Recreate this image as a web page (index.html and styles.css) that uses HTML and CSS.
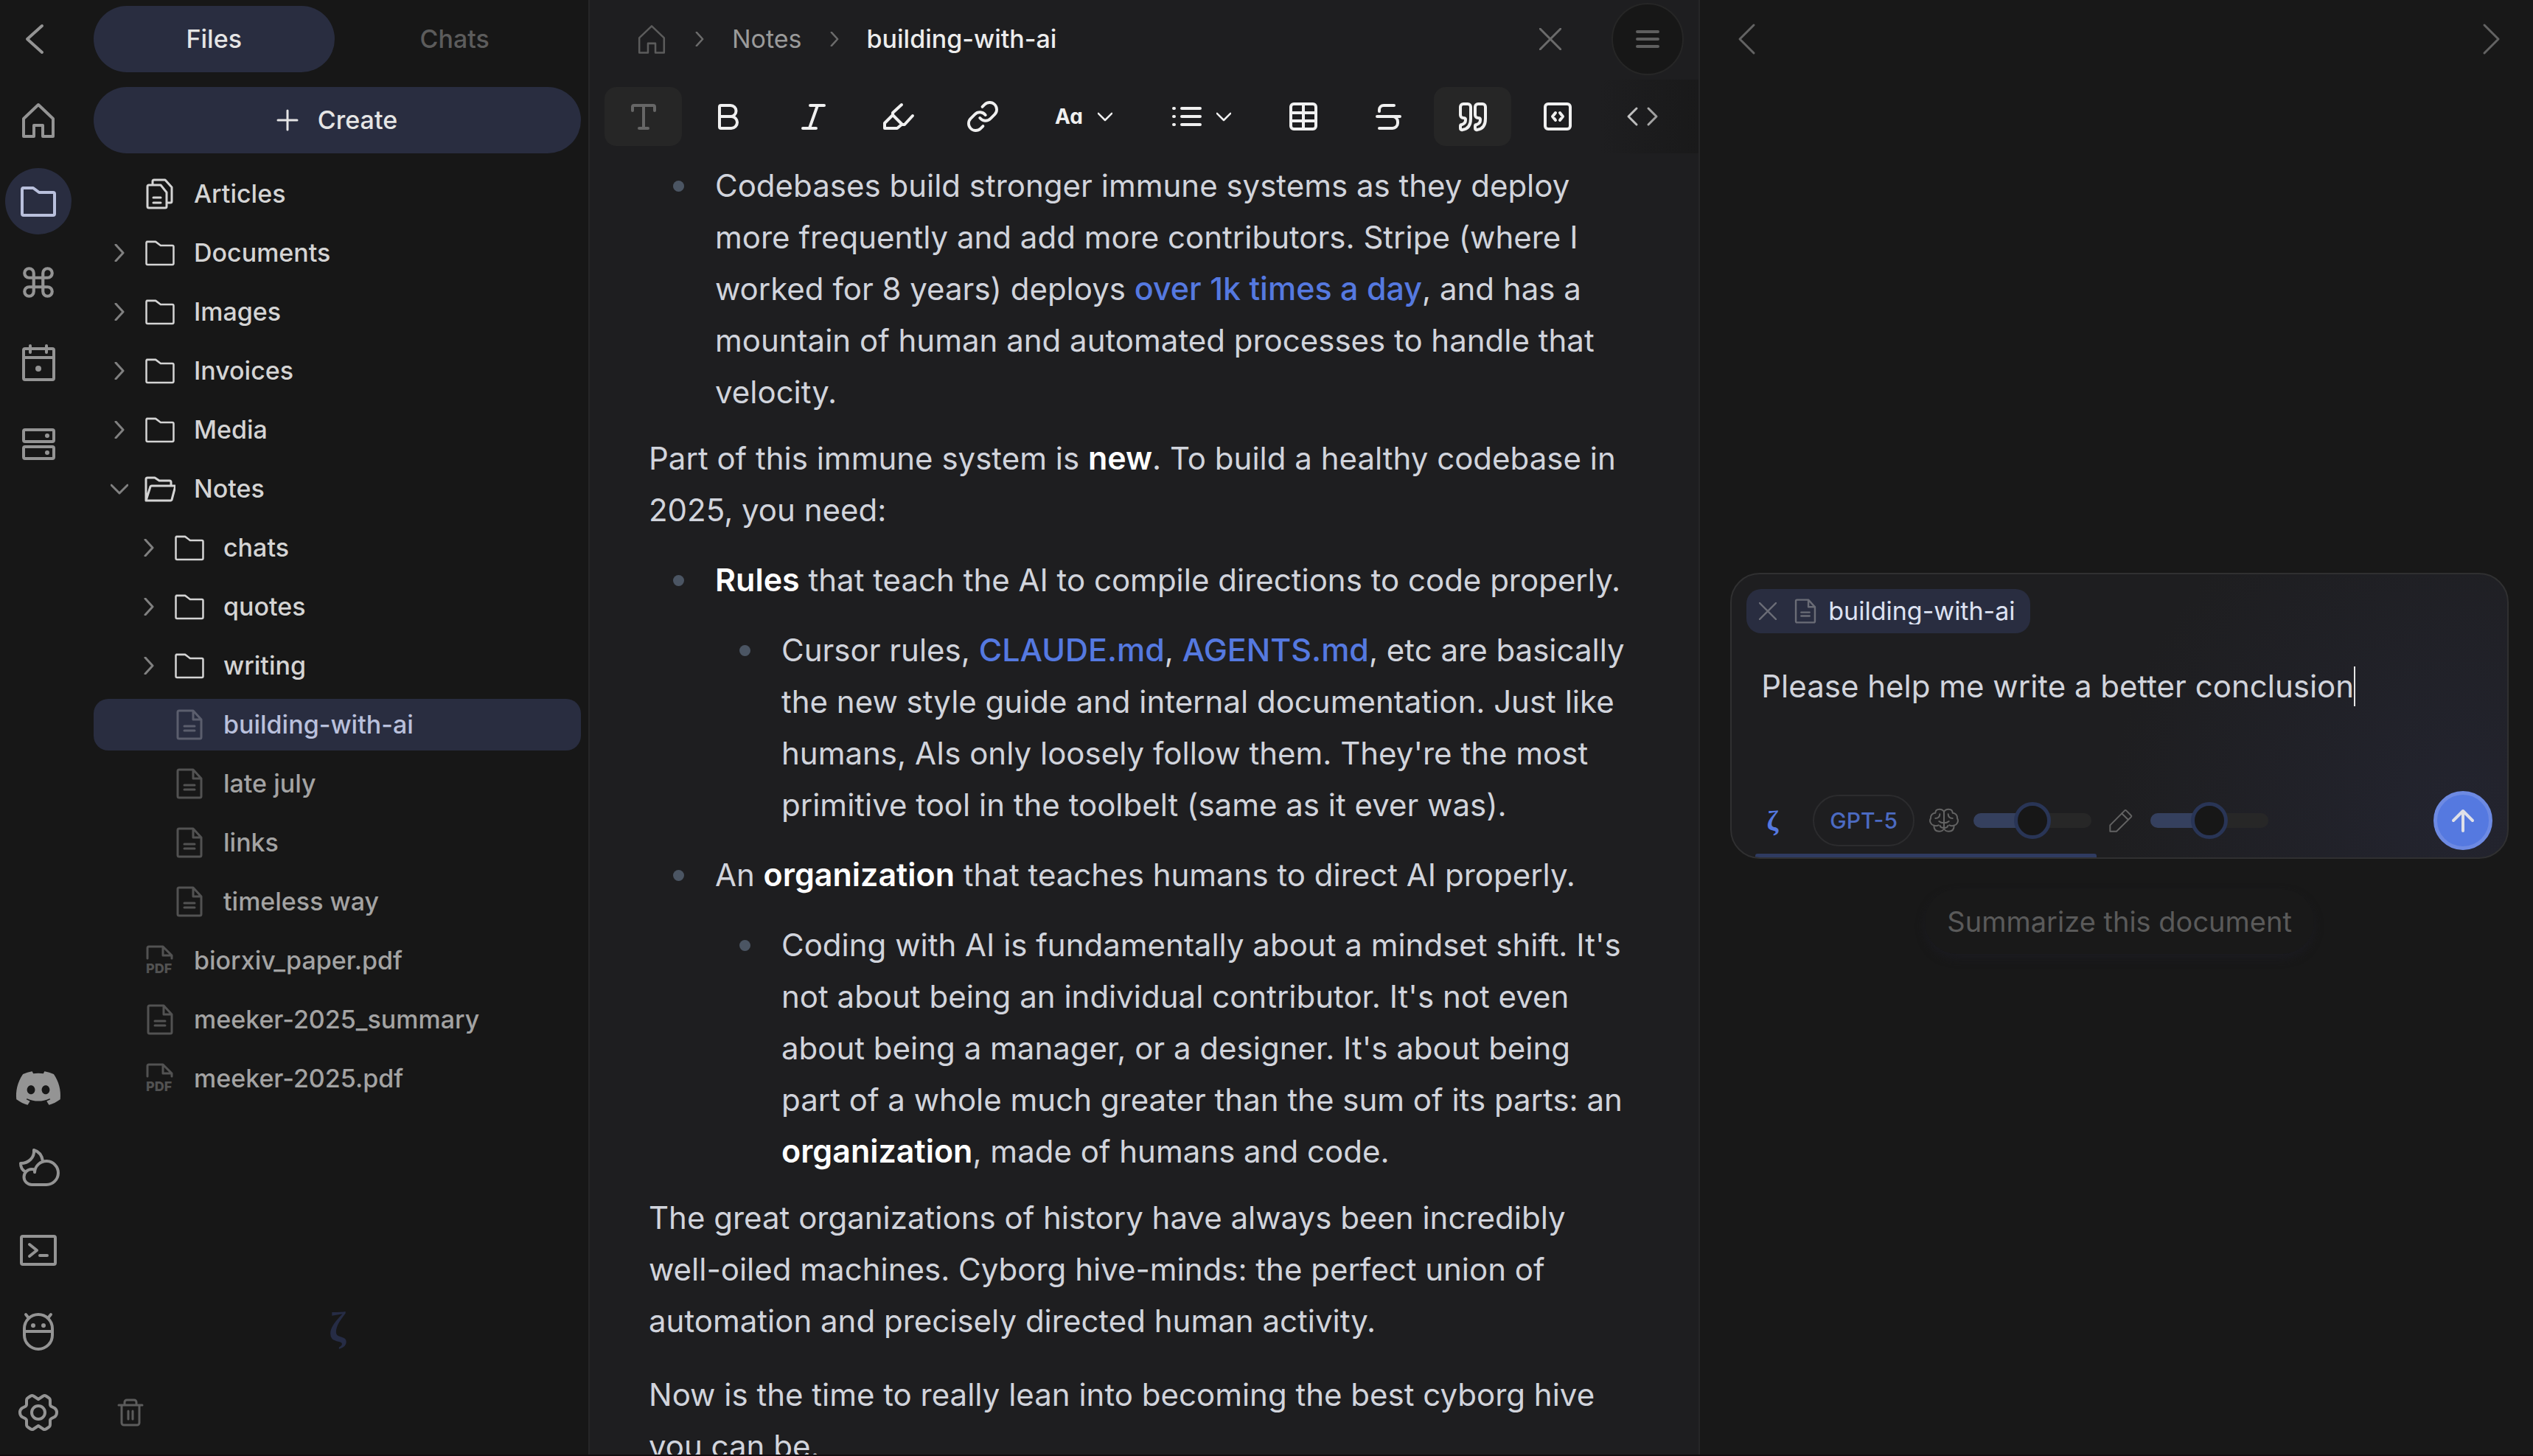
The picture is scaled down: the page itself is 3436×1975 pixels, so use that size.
FILE: index.html
```
<!DOCTYPE html>
<html lang="en">
<head>
<meta charset="utf-8">
<title>building-with-ai</title>
<link rel="stylesheet" href="styles.css">
</head>
<body>
<svg class="sprite" aria-hidden="true">
  <symbol id="home" viewBox="0 0 50 50"><path d="M5 23 25 4 45 23V47H31V32H19V47H5Z"/></symbol>
  <symbol id="folder" viewBox="0 0 50 50"><path d="M4 7H18L26 13H45a2 2 0 0 1 2 2V42a2 2 0 0 1-2 2H5a2 2 0 0 1-2-2V9a2 2 0 0 1 2-2Z"/></symbol>
  <symbol id="folder-open" viewBox="0 0 42 42"><path d="M2 37V8a2 2 0 0 1 2-2H14L20 10H34a2 2 0 0 1 2 2V17M2 37 8 18a2 2 0 0 1 2-1H42L37 36a2 2 0 0 1-2 1Z"/></symbol>
  <symbol id="file" viewBox="0 0 42 42"><path d="M7 2H26L37 14V38a2 2 0 0 1-2 2H7a2 2 0 0 1-2-2V4a2 2 0 0 1 2-2ZM26 2V14H37M14 23H28M14 29H28"/></symbol>
  <symbol id="files" viewBox="0 0 42 42"><path d="M6 9H22L30 19V38a2 2 0 0 1-2 2H6a2 2 0 0 1-2-2V11a2 2 0 0 1 2-2ZM11 9V4a2 2 0 0 1 2-2H28L37 12V31a2 2 0 0 1-2 2H31M12 26H22M12 33H22"/></symbol>
  <symbol id="pdf" viewBox="0 0 42 42"><path d="M4 18V4a2 2 0 0 1 2-2H25L37 14V18M25 2V14H37"/><text x="2" y="38">PDF</text></symbol>
  <symbol id="right" viewBox="0 0 24 24"><path d="M7 1 17 12 7 23"/></symbol>
  <symbol id="down" viewBox="0 0 24 24"><path d="M1 7 12 18 23 7"/></symbol>
  <symbol id="close" viewBox="0 0 30 30"><path d="M0 0 30 30M30 0 0 30"/></symbol>
</svg>

<div class="app">
  <nav class="rail" aria-label="Main">
    <button class="rail-item" aria-label="Back"><svg class="icon bold" viewBox="0 0 50 50"><path d="M30 7 10 25 30 43"/></svg></button>
    <button class="rail-item" aria-label="Home"><svg class="icon"><use href="#home"/></svg></button>
    <button class="rail-item active" aria-label="Files"><svg class="icon"><use href="#folder"/></svg></button>
    <button class="rail-item" aria-label="Commands"><svg class="icon thin24" viewBox="0 0 24 24"><path d="M15 6v12a3 3 0 1 0 3-3H6a3 3 0 1 0 3 3V6a3 3 0 1 0-3 3h12a3 3 0 1 0-3-3"/></svg></button>
    <button class="rail-item" aria-label="Calendar"><svg class="icon" viewBox="0 0 50 50"><rect x="5" y="5" width="41" height="42" rx="2"/><path d="M5 17H46M14 1V10M36 1V10"/><circle class="solid" cx="25" cy="32" r="4"/></svg></button>
    <button class="rail-item" aria-label="Storage"><svg class="icon" viewBox="0 0 50 50"><rect x="5" y="5" width="41" height="16" rx="2"/><rect x="5" y="28" width="41" height="16" rx="2"/><circle class="solid" cx="37" cy="13" r="3"/><circle class="solid" cx="37" cy="36" r="3"/></svg></button>
    <span class="spacer"></span>
    <button class="rail-item" aria-label="Discord"><svg class="icon filled" viewBox="0 0 24 24"><path d="M20.317 4.3698a19.7913 19.7913 0 00-4.8851-1.5152.0741.0741 0 00-.0785.0371c-.211.3753-.4447.8648-.6083 1.2495-1.8447-.2762-3.68-.2762-5.4868 0-.1636-.3933-.4058-.8742-.6177-1.2495a.077.077 0 00-.0785-.037 19.7363 19.7363 0 00-4.8852 1.515.0699.0699 0 00-.0321.0277C.5334 9.0458-.319 13.5799.0992 18.0578a.0824.0824 0 00.0312.0561c2.0528 1.5076 4.0413 2.4228 5.9929 3.0294a.0777.0777 0 00.0842-.0276c.4616-.6304.8731-1.2952 1.226-1.9942a.076.076 0 00-.0416-.1057c-.6528-.2476-1.2743-.5495-1.8722-.8923a.077.077 0 01-.0076-.1277c.1258-.0943.2517-.1923.3718-.2914a.0743.0743 0 01.0776-.0105c3.9278 1.7933 8.18 1.7933 12.0614 0a.0739.0739 0 01.0785.0095c.1202.099.246.1981.3728.2924a.077.077 0 01-.0066.1276 12.2986 12.2986 0 01-1.873.8914.0766.0766 0 00-.0407.1067c.3604.698.7719 1.3628 1.225 1.9932a.076.076 0 00.0842.0286c1.961-.6067 3.9495-1.5219 6.0023-3.0294a.077.077 0 00.0313-.0552c.5004-5.177-.8382-9.6739-3.5485-13.6604a.061.061 0 00-.0312-.0286zM8.02 15.3312c-1.1825 0-2.1569-1.0857-2.1569-2.419 0-1.3332.9555-2.4189 2.157-2.4189 1.2108 0 2.1757 1.0952 2.1568 2.419 0 1.3332-.9555 2.4189-2.1569 2.4189zm7.9748 0c-1.1825 0-2.1569-1.0857-2.1569-2.419 0-1.3332.9554-2.4189 2.1569-2.4189 1.2108 0 2.1757 1.0952 2.1568 2.419 0 1.3332-.946 2.4189-2.1568 2.4189Z"/></svg></button>
    <button class="rail-item" aria-label="Theme"><svg class="icon" viewBox="0 2 50 50"><path d="M16 48H36A16 16 0 1 0 20 31C20 28 21 27 16 27A10 10 0 0 0 16 48ZM31 16C30 9 26 3 19 1C20 11 12 19 1 19C1 24 3 28 7 30"/></svg></button>
    <button class="rail-item" aria-label="Terminal"><svg class="icon" viewBox="0 0 50 50"><rect x="2" y="6" width="46" height="38" rx="2"/><path d="M13 17 23 25 13 33M27 32H37"/></svg></button>
    <button class="rail-item" aria-label="Report a bug"><svg class="icon" viewBox="0 0 50 50"><rect x="6" y="2" width="38" height="47" rx="19"/><path d="M6 25H44M8 2 12 7M42 2 38 7"/><circle class="solid" cx="18" cy="17" r="3"/><circle class="solid" cx="32" cy="17" r="3"/></svg></button>
    <button class="rail-item" aria-label="Settings"><svg class="icon" viewBox="0 0 50 50"><path d="M25 7 31 3Q33 1 36 3L39 5Q41 6 41 9V14Q41 16 43 17L47 19Q50 21 50 25T47 31L43 33Q41 34 41 36V41Q41 44 39 45L36 47Q33 49 31 47L25 43 19 47Q17 49 14 47L11 45Q9 44 9 41V36Q9 34 7 33L3 31Q0 29 0 25T3 19L7 17Q9 16 9 14V9Q9 6 11 5L14 3Q17 1 19 3Z"/><circle cx="25" cy="25" r="9"/></svg></button>
  </nav>

  <aside class="sidebar">
    <div class="tabs">
      <button class="tab selected">Files</button>
      <button class="tab">Chats</button>
    </div>
    <button class="create"><svg class="plus" viewBox="0 0 28 28"><path d="M14 1V27M1 14H27"/></svg>Create</button>
    <ul class="tree">
      <li><a class="row" href="#"><span class="twist"></span><svg class="node"><use href="#files"/></svg>Articles</a></li>
      <li><a class="row" href="#"><svg class="twist"><use href="#right"/></svg><svg class="node"><use href="#folder"/></svg>Documents</a></li>
      <li><a class="row" href="#"><svg class="twist"><use href="#right"/></svg><svg class="node"><use href="#folder"/></svg>Images</a></li>
      <li><a class="row" href="#"><svg class="twist"><use href="#right"/></svg><svg class="node"><use href="#folder"/></svg>Invoices</a></li>
      <li><a class="row" href="#"><svg class="twist"><use href="#right"/></svg><svg class="node"><use href="#folder"/></svg>Media</a></li>
      <li><a class="row" href="#"><svg class="twist"><use href="#down"/></svg><svg class="node"><use href="#folder-open"/></svg>Notes</a>
        <ul class="tree nested">
          <li><a class="row" href="#"><svg class="twist"><use href="#right"/></svg><svg class="node"><use href="#folder"/></svg>chats</a></li>
          <li><a class="row" href="#"><svg class="twist"><use href="#right"/></svg><svg class="node"><use href="#folder"/></svg>quotes</a></li>
          <li><a class="row" href="#"><svg class="twist"><use href="#right"/></svg><svg class="node"><use href="#folder"/></svg>writing</a></li>
          <li><a class="row doc current" href="#"><span class="twist"></span><svg class="node"><use href="#file"/></svg>building-with-ai</a></li>
          <li><a class="row doc" href="#"><span class="twist"></span><svg class="node"><use href="#file"/></svg>late july</a></li>
          <li><a class="row doc" href="#"><span class="twist"></span><svg class="node"><use href="#file"/></svg>links</a></li>
          <li><a class="row doc" href="#"><span class="twist"></span><svg class="node"><use href="#file"/></svg>timeless way</a></li>
        </ul>
      </li>
      <li><a class="row doc" href="#"><span class="twist"></span><svg class="node"><use href="#pdf"/></svg>biorxiv_paper.pdf</a></li>
      <li><a class="row doc" href="#"><span class="twist"></span><svg class="node"><use href="#file"/></svg>meeker-2025_summary</a></li>
      <li><a class="row doc" href="#"><span class="twist"></span><svg class="node"><use href="#pdf"/></svg>meeker-2025.pdf</a></li>
    </ul>
    <div class="brand">ζ</div>
    <button class="trash" aria-label="Trash"><svg viewBox="0 0 34 38"><path d="M1 9H33M9 9V5a3 3 0 0 1 3-3H22a3 3 0 0 1 3 3V9M5 9V33a3 3 0 0 0 3 3H26a3 3 0 0 0 3-3V9M14 17V28M20 17V28"/></svg></button>
  </aside>

  <main class="editor">
    <header class="crumbs">
      <a class="crumb-home" href="#" aria-label="Home"><svg><use href="#home"/></svg></a>
      <svg class="sep"><use href="#right"/></svg>
      <a href="#">Notes</a>
      <svg class="sep"><use href="#right"/></svg>
      <span class="here">building-with-ai</span>
      <span class="spacer"></span>
      <button class="round" aria-label="Close"><svg class="x"><use href="#close"/></svg></button>
      <button class="round menu" aria-label="Menu"><svg class="x" viewBox="0 0 30 30"><path d="M1 5H29M1 15H29M1 25H29"/></svg></button>
    </header>

    <div class="toolbar">
      <button class="tool on muted" aria-label="Text"><svg viewBox="0 0 50 50"><path d="M10 17V12a2 2 0 0 1 2-2H38a2 2 0 0 1 2 2V17M25 10V41M19 41H31"/></svg></button>
      <button class="tool" aria-label="Bold"><svg viewBox="0 0 50 50"><path d="M29 25H13V12a2 2 0 0 1 2-2H28a7 7 0 0 1 0 15H29a8 8 0 0 1 0 16H15a2 2 0 0 1-2-2V25"/></svg></button>
      <button class="tool" aria-label="Italic"><svg viewBox="0 0 50 50"><path d="M21 10H40M11 41H29M31 10 20 41"/></svg></button>
      <button class="tool" aria-label="Highlight"><svg viewBox="0 0 50 50"><path d="M30 9 18 20V23L7 34V41H24L30 36H34L45 24M18 23 31 36"/></svg></button>
      <button class="tool" aria-label="Link"><svg class="link24" viewBox="0 0 24 24"><path d="M10 13a5 5 0 0 0 7.54.54l3-3a5 5 0 0 0-7.07-7.07l-1.72 1.71M14 11a5 5 0 0 0-7.54-.54l-3 3a5 5 0 0 0 7.07 7.07l1.71-1.71"/></svg></button>
      <button class="tool wide" aria-label="Text size"><span class="aa">Aa</span><svg class="caret-down"><use href="#down"/></svg></button>
      <button class="tool wide" aria-label="List"><svg class="list" viewBox="0 0 40 50"><path d="M13 14H38M13 25H38M13 36H38M2 14h1M2 25h1M2 36h1"/></svg><svg class="caret-down"><use href="#down"/></svg></button>
      <button class="tool" aria-label="Table"><svg viewBox="0 0 50 50"><rect x="8" y="8" width="34" height="34" rx="4"/><path d="M8 20H42M8 31H42M25 8V42"/></svg></button>
      <button class="tool" aria-label="Strikethrough"><svg viewBox="0 0 50 50"><path d="M10 25H41M13 18V16a6 6 0 0 1 6-6H33M29 25H31a7 7 0 0 1 7 7V34a7 7 0 0 1-7 7H13"/></svg></button>
      <button class="tool on" aria-label="Quote"><svg viewBox="0 0 50 50"><path d="M12 8H18a4 4 0 0 1 4 4V28c0 9-4 14-11 15a2 2 0 0 1-3-2V38a2 2 0 0 1 2-2c3-1 5-3 5-6v-1c0-1-1-2-3-2a4 4 0 0 1-4-4V12a4 4 0 0 1 4-4ZM32 8H38a4 4 0 0 1 4 4V28c0 9-4 14-11 15a2 2 0 0 1-3-2V38a2 2 0 0 1 2-2c3-1 5-3 5-6v-1c0-1-1-2-3-2a4 4 0 0 1-4-4V12a4 4 0 0 1 4-4Z"/></svg></button>
      <button class="tool" aria-label="Code block"><svg viewBox="0 0 50 50"><rect x="8" y="8" width="34" height="34" rx="4"/><path d="M22 20 18 25 22 30M28 20 32 25 28 30"/></svg></button>
      <button class="tool" aria-label="Inline code"><svg class="light" viewBox="0 0 50 50"><path d="M17 14 6 25 17 36M33 14 44 25 33 36"/></svg></button>
    </div>

    <article class="page">
      <ul>
        <li>Codebases build stronger immune systems as they deploy more frequently and add more contributors. Stripe (where I worked for 8 years) deploys <a href="#">over 1k times a day</a>, and has a mountain of human and automated processes to handle that velocity.</li>
      </ul>
      <p>Part of this immune system is <strong>new</strong>. To build a healthy codebase in 2025, you need:</p>
      <ul>
        <li><strong>Rules</strong> that teach the AI to compile directions to code properly.
          <ul>
            <li>Cursor rules, <a href="#">CLAUDE.md</a>, <a href="#">AGENTS.md</a>, etc are basically the new style guide and internal documentation. Just like humans, AIs only loosely follow them. They're the most primitive tool in the toolbelt (same as it ever was).</li>
          </ul>
        </li>
        <li>An <strong>organization</strong> that teaches humans to direct AI properly.
          <ul>
            <li>Coding with AI is fundamentally about a mindset shift. It's not about being an individual contributor. It's not even about being a manager, or a designer. It's about being part of a whole much greater than the sum of its parts: an <strong>organization</strong>, made of humans and code.</li>
          </ul>
        </li>
      </ul>
      <p>The great organizations of history have always been incredibly well-oiled machines. Cyborg hive-minds: the perfect union of automation and precisely directed human activity.</p>
      <p>Now is the time to really lean into becoming the best cyborg hive you can be.</p>
    </article>
  </main>

  <section class="assistant" aria-label="Assistant">
    <header class="history">
      <button aria-label="Previous chat"><svg viewBox="0 0 50 50"><path d="M35 6 16 25 35 44"/></svg></button>
      <button aria-label="Next chat"><svg viewBox="0 0 50 50"><path d="M15 6 34 25 15 44"/></svg></button>
    </header>
    <div class="chat">
      <form class="composer">
        <div class="chip">
          <button type="button" aria-label="Remove"><svg class="chip-x"><use href="#close"/></svg></button>
          <svg class="chip-file"><use href="#file"/></svg>
          <span class="chip-name">building-with-ai</span>
        </div>
        <div class="prompt">
          <textarea aria-label="Message" rows="1">Please help me write a better conclusion</textarea>
          <span class="text-caret"></span>
        </div>
        <div class="controls">
          <button type="button" class="zeta">ζ</button>
          <button type="button" class="model">GPT-5</button>
          <svg class="hint" viewBox="48 68 120 120"><g id="lobe"><path d="M108 94C108 87 99 82 89 82C79 82 73 88 73 97C61 98 53 107 54 119C47 130 54 145 67 148C67 164 75 172 89 172C99 172 108 167 108 158"/><path d="M91 102C91 114 84 119 73 119M108 138C100 138 92 135 88 131M67 148C75 151 80 150 86 147M108 158C100 158 93 154 92 149"/></g><use href="#lobe" transform="translate(216 0) scale(-1 1)"/><path d="M108 94V158"/></svg>
          <input type="range" min="0" max="100" value="50" aria-label="Reasoning">
          <svg class="hint" viewBox="770 67 120 120"><path d="M786 171V146L845 87Q848 83 852 87L871 106Q875 109 871 113L812 171ZM833 98 860 124"/></svg>
          <input type="range" min="0" max="100" value="50" aria-label="Verbosity">
          <span class="spacer"></span>
          <button type="submit" class="send" aria-label="Send"><svg viewBox="0 0 34 34"><path d="M17 31V4M4 17 17 4 30 17"/></svg></button>
        </div>
        <div class="usage"></div>
      </form>
      <button class="suggestion">Summarize this document</button>
    </div>
  </section>
</div>
</body>
</html>
```
FILE: styles.css
```
:root {
  --base: #171717;
  --panel: #1e1e20;
  --line: #262627;
  --accent: #5579e0;
  --tint: #292d40;
  --dim: #5c5c5c;
}

* { box-sizing: border-box; }

body {
  margin: 0;
  background: var(--base);
  color: #d4d4d4;
  font: 400 34px/50px Inter, "Liberation Sans", sans-serif;
}

button {
  display: flex;
  align-items: center;
  justify-content: center;
  padding: 0;
  border: 0;
  background: none;
  color: inherit;
  font: inherit;
}

a { color: inherit; text-decoration: none; }

svg {
  flex: none;
  overflow: visible;
  fill: none;
  stroke: currentColor;
  stroke-width: 3px;
  stroke-linecap: round;
  stroke-linejoin: round;
}

.sprite { position: absolute; width: 0; height: 0; }
.solid { fill: currentColor; stroke: none; }
.spacer { flex: 1; }

.app {
  display: grid;
  grid-template-columns: 104px 696px minmax(0, 4fr) minmax(0, 3fr);
  height: 100vh;
  border-bottom: 2px solid #120c0f;
}

/* Icon rail */

.rail {
  display: flex;
  flex-direction: column;
  gap: 20px;
  padding: 8px 7px 12px;
  color: #949494;
}

.rail-item {
  flex: none;
  width: 90px;
  height: 90px;
  border-radius: 50%;
}

.rail-item.active { background: var(--tint); color: #b9c0dc; }
.icon { width: 50px; height: 50px; stroke-width: 4px; }
.icon.thin24 { stroke-width: 2px; }
.icon.filled { width: 60px; height: 60px; fill: currentColor; stroke: none; }

/* Sidebar */

.sidebar {
  display: flex;
  flex-direction: column;
  padding: 8px 10px 12px 23px;
  border-right: 2px solid var(--line);
  font-weight: 500;
}

.tabs {
  display: grid;
  grid-template-columns: 1fr 1fr;
  padding-right: 8px;
}

.tab { height: 90px; border-radius: 45px; color: var(--dim); }
.tab.selected { background: var(--tint); color: #e5e5e5; }

.create {
  flex: none;
  gap: 27px;
  height: 90px;
  margin: 20px 0;
  border-radius: 45px;
  background: var(--tint);
  color: #e5e5e5;
}

.plus { width: 28px; height: 28px; }

.tree {
  display: flex;
  flex-direction: column;
  gap: 10px;
  margin: 0;
  padding: 0;
  list-style: none;
}

.nested { margin-top: 10px; }

.row {
  display: flex;
  align-items: center;
  height: 70px;
  padding-left: 23px;
  border-radius: 20px;
}

.nested .row { padding-left: 63px; }
.twist { width: 24px; height: 24px; margin-right: 22px; color: #808080; }
.node { width: 42px; height: 42px; margin-right: 25px; stroke-width: 3px; }
.row.doc { color: #a3a3a3; }
.row.doc .node { color: #525252; }
.row.current { background: var(--tint); color: #b9c0dc; }
.row.current .node { color: #5b5e6d; }

#pdf text {
  fill: currentColor;
  stroke: none;
  font: 800 18px Inter, sans-serif;
}

.brand {
  margin: auto 0 36px;
  color: #262c45;
  font: 700 56px/70px "Liberation Serif", serif;
  text-align: center;
}

.trash {
  flex: none;
  width: 100px;
  height: 90px;
  color: var(--dim);
}

.trash svg { width: 34px; height: 38px; }

/* Editor */

.editor {
  display: flex;
  flex-direction: column;
  min-height: 0;
  background: var(--panel);
  border-right: 2px solid var(--line);
}

.crumbs {
  display: flex;
  align-items: center;
  gap: 34px;
  height: 108px;
  padding: 4px 20px 6px 63px;
  color: #9a9a9a;
}

.crumb-home { display: flex; color: var(--dim); }
.crumb-home svg { width: 42px; height: 42px; }
.sep { width: 20px; height: 20px; color: #6b6b6b; }
.here { color: #ededed; font-weight: 500; }

.round {
  width: 98px;
  height: 98px;
  border-radius: 50%;
  color: #6b6b6b;
}

.round.menu { border: 2px solid #262626; background: var(--base); color: #5f5f5f; }
.x { width: 30px; height: 30px; }
.menu .x { stroke-width: 4px; }

.toolbar {
  position: relative;
  display: flex;
  gap: 10px;
  height: 100px;
  padding: 10px 20px;
  overflow: hidden;
  color: #f0f0f0;
}

.toolbar::after {
  content: "";
  position: absolute;
  inset: 0 0 0 auto;
  width: 135px;
  background: linear-gradient(90deg, transparent, #171717 90%);
  opacity: .6;
}

.tool { flex: none; width: 105px; height: 80px; border-radius: 16px; }
.tool svg { width: 50px; height: 50px; stroke-width: 4px; }
.tool svg.light { stroke-width: 3px; }
.tool svg.link24 { width: 46px; height: 46px; stroke-width: 2px; }
.tool.on { background: #262626; }
.tool.muted { color: #666; }
.tool.wide { gap: 20px; width: 150px; }
.tool svg.list { width: 40px; }
.tool svg.caret-down { width: 20px; height: 20px; stroke-width: 3px; }
.aa { font-size: 28px; font-weight: 700; font-feature-settings: "cv11"; }

.page {
  flex: 1;
  min-height: 0;
  overflow: hidden;
  padding: 9px 90px 0 80px;
  color: #d1d4dc;
  font-size: 42px;
  line-height: 70px;
}

.page p, .page ul { margin: 0; padding: 0; list-style: none; }
.page p + p { margin-top: 30px; }
.page ul + p { margin-top: 20px; }
.page p + ul, .page li ul, .page li + li { margin-top: 25px; }
.page li { position: relative; padding-left: 90px; }

.page li::before {
  content: "";
  position: absolute;
  top: 28px;
  left: 33px;
  width: 15px;
  height: 15px;
  border-radius: 50%;
  background: #4b5563;
}

.page a, .page strong { font-size: 43px; line-height: 50px; }
.page a { color: var(--accent); font-weight: 500; }
.page strong { color: #fff; font-weight: 600; }

/* Assistant */

.assistant {
  display: flex;
  flex-direction: column;
  background: #181818;
}

.history {
  display: flex;
  justify-content: space-between;
  padding: 28px 31px 28px 38px;
  color: #636363;
}

.history svg { width: 50px; height: 50px; }

.chat {
  display: flex;
  flex: 1;
  flex-direction: column;
  align-items: center;
  justify-content: center;
  gap: 41px;
  padding: 0 33px 8px 41px;
}

.composer {
  position: relative;
  align-self: stretch;
  overflow: hidden;
  padding: 20px 20px 10px;
  border: 2px solid #303031;
  border-radius: 40px;
  background: radial-gradient(circle 480px at calc(100% - 60px) calc(100% - 50px), #23242f, var(--panel)) var(--panel);
}

.chip {
  display: flex;
  align-items: center;
  width: fit-content;
  height: 60px;
  padding: 0 20px 0 17px;
  border-radius: 20px;
  background: var(--tint);
  color: #6a6c76;
}

.chip-x { width: 24px; height: 24px; }
.chip-file { width: 34px; height: 34px; margin: 0 14px 0 22px; }
.chip-name { overflow: hidden; color: #dde2f2; line-height: 36px; }

.prompt {
  display: flex;
  height: 177px;
  margin: 37px 0 0 20px;
}

.prompt textarea {
  field-sizing: content;
  height: 70px;
  padding: 0;
  border: 0;
  outline: 0;
  resize: none;
  overflow: hidden;
  background: none;
  color: #d1d4dc;
  font: inherit;
  font-size: 42px;
  line-height: 70px;
}

.text-caret { flex: none; width: 2px; height: 54px; margin-top: 8px; background: #e5e5e5; }

.controls { display: flex; align-items: center; gap: 20px; }

.zeta {
  width: 70px;
  height: 70px;
  color: var(--accent);
  font: 700 38px/50px "Liberation Serif", serif;
}

.model {
  height: 70px;
  padding: 0 21px;
  border: 2px solid #2c2c2e;
  border-radius: 35px;
  color: #4c6bc2;
  font-size: 30px;
  font-weight: 500;
}

.hint { width: 40px; height: 40px; color: #636363; stroke-width: 6px; }

input[type="range"] {
  appearance: none;
  width: 160px;
  height: 50px;
  margin: 0;
  background: none;
}

input[type="range"]::-webkit-slider-runnable-track {
  height: 20px;
  border-radius: 10px;
  background: linear-gradient(90deg, #35405e 50%, #272727 50%);
}

input[type="range"]::-webkit-slider-thumb {
  appearance: none;
  width: 50px;
  height: 50px;
  margin-top: -15px;
  border: 5px solid #293556;
  border-radius: 50%;
  background: var(--base);
}

.send {
  width: 80px;
  height: 80px;
  border: 5px solid #6d8ae3;
  border-radius: 50%;
  background: var(--accent);
  color: #dfe0e8;
}

.send svg { width: 34px; height: 34px; stroke-width: 4px; }

.usage {
  position: absolute;
  bottom: 0;
  left: 32px;
  width: 44%;
  height: 5px;
  border-radius: 3px 3px 0 0;
  background: #2f3b61;
}

.suggestion {
  height: 88px;
  padding: 0 30px;
  border-radius: 44px;
  background: #191919;
  box-shadow: 0 6px 12px #1b1b20;
  color: #5a5a5a;
  font-size: 38px;
}
```
